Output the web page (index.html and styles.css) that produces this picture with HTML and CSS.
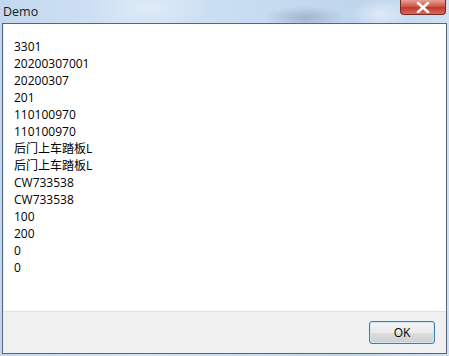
FILE: index.html
```html
<!DOCTYPE html>
<html lang="zh-CN">
<head>
  <meta charset="UTF-8">
  <title>Demo</title>
  <link rel="stylesheet" href="styles.css">
</head>
<body>
  <div class="window">
    <div class="titlebar">
      <span class="title">Demo</span>
      <div class="close-btn">
        <svg width="14" height="11" viewBox="0 0 14 11">
          <path d="M2 1 L12 10 M12 1 L2 10" stroke="#ffffff" stroke-width="2.6" stroke-linecap="round"/>
        </svg>
      </div>
    </div>

    <div class="client">
      <div class="content">
        <div>3301</div>
        <div>20200307001</div>
        <div>20200307</div>
        <div>201</div>
        <div>110100970</div>
        <div>110100970</div>
        <div>后门上车踏板L</div>
        <div>后门上车踏板L</div>
        <div>CW733538</div>
        <div>CW733538</div>
        <div>100</div>
        <div>200</div>
        <div>0</div>
        <div>0</div>
      </div>
      <div class="footer">
        <button class="ok-btn">OK</button>
      </div>
    </div>
  </div>
</body>
</html>
```

FILE: styles.css
```css
body {
  margin: 0;
  font-family: 'Open Sans', 'Noto Sans CJK SC', sans-serif;
  font-size: 12px;
  color: #000;
}

.window {
  width: 449px;
  height: 356px;
  display: flex;
  flex-direction: column;
  background:
    radial-gradient(ellipse 40px 12px at 305px 18px, rgba(120, 140, 165, 0.45), rgba(120, 140, 165, 0) 100%),
    radial-gradient(ellipse 30px 14px at 380px 14px, rgba(235, 242, 250, 0.7), rgba(235, 242, 250, 0) 100%),
    radial-gradient(ellipse 60px 20px at 150px 8px, rgba(230, 240, 250, 0.6), rgba(230, 240, 250, 0) 100%),
    linear-gradient(90deg, #c3d8ee 0%, #d2e3f4 30%, #c6dbf0 60%, #bfd5ec 80%, #cfe1f3 100%);
}

.titlebar {
  height: 23px;
  display: flex;
  justify-content: space-between;
  align-items: flex-start;
}

.title {
  padding: 3px 0 0 3px;
  font-size: 12.5px;
  color: #1a1a1a;
}

.close-btn {
  width: 46px;
  height: 15px;
  margin-right: 3px;
  box-sizing: border-box;
  border: 1px solid #7a2a22;
  border-top: none;
  border-radius: 0 0 4px 4px;
  background: linear-gradient(#e8a093 0%, #d1584a 45%, #c0392b 55%, #d86b5a 100%);
  display: flex;
  justify-content: center;
  align-items: center;
}

.client {
  flex: 1;
  margin: 0 2px 2px 2px;
  border: 1px solid #55677a;
  display: flex;
  flex-direction: column;
  background-color: #f0f0f0;
}

.content {
  flex: 1;
  background-color: #fff;
  padding: 14px 0 0 10px;
  line-height: 17px;
  border-left: 1px solid #e6eef6;
}

.footer {
  height: 42px;
  border-top: 1px solid #dfdfdf;
  display: flex;
  justify-content: flex-end;
  align-items: flex-start;
  padding: 9px 11px 0 0;
  box-sizing: border-box;
}

.ok-btn {
  width: 66px;
  height: 23px;
  font-family: 'Open Sans', sans-serif;
  font-size: 12px;
  color: #000;
  border: 1px solid #3c7fb1;
  border-radius: 3px;
  background: linear-gradient(#f2f2f2 0%, #ebebeb 50%, #dddddd 51%, #cfcfcf 100%);
  box-shadow: inset 0 0 0 1px #c9e7f7;
  padding: 0;
}
```
